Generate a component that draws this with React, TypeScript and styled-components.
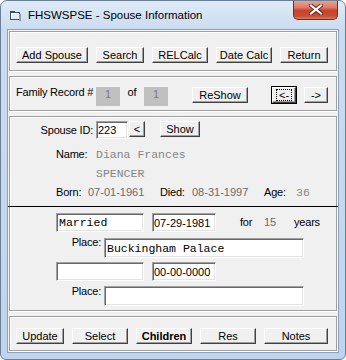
import styled, { createGlobalStyle } from "styled-components";

const GlobalStyle = createGlobalStyle`
  * { box-sizing: border-box; }
  html, body { margin: 0; padding: 0; background: #fff; }
  body {
    font-family: "Liberation Sans", Arial, sans-serif;
    font-size: 11px;
    color: #000;
  }
`;

const Window = styled.div`
  width: 346px;
  height: 360px;
  display: flex;
  flex-direction: column;
  background: linear-gradient(180deg, #dfeaf7 0px, #cadcf0 28px, #bfd4ec 100%);
  border: 1px solid #6b7f99;
  border-radius: 7px 7px 6px 6px;
  overflow: hidden;
`;

const TitleBar = styled.div`
  height: 28px;
  display: flex;
  align-items: center;
  flex-shrink: 0;
`;

const TitleIcon = styled.svg`
  margin-left: 9px;
  margin-top: 2px;
`;

const Title = styled.span`
  margin-left: 7px;
  font-family: "Liberation Sans", Arial, sans-serif;
  font-size: 11.5px;
  color: #000;
`;

const CloseButton = styled.div`
  margin-left: auto;
  margin-right: 7px;
  align-self: flex-start;
  margin-top: -1px;
  width: 45px;
  height: 20px;
  border: 1px solid #7c2a1f;
  border-top: none;
  border-radius: 0 0 5px 5px;
  background: linear-gradient(180deg, #e9a898 0%, #dd7a66 40%, #c7432c 55%, #c94e33 85%, #dc7b56 100%);
  display: flex;
  align-items: center;
  justify-content: center;
`;

const Client = styled.div`
  margin: 0 6px;
  height: 324px;
  flex-shrink: 0;
  background: #f0f0f0;
  border: 1px solid #8ca1bd;
  padding: 0 1px;
  display: flex;
  flex-direction: column;
`;

const Panel = styled.div<{ $h: number; $pt: number; $mt: number; $pl?: number }>`
  height: ${({ $h }) => $h}px;
  margin-top: ${({ $mt }) => $mt}px;
  padding-top: ${({ $pt }) => $pt}px;
  padding-left: ${({ $pl }) => $pl ?? 6}px;
  border: 1px solid #a0a0a0;
  box-shadow: inset 1px 1px 0 #fff, 1px 1px 0 #fff;
  display: flex;
  flex-direction: column;
`;

const Row = styled.div<{ $h: number; $mt?: number; $top?: boolean }>`
  display: flex;
  align-items: ${({ $top }) => ($top ? "flex-start" : "center")};
  height: ${({ $h }) => $h}px;
  margin-top: ${({ $mt }) => $mt ?? 0}px;
  flex-shrink: 0;
`;

const Button = styled.button<{ $w: number; $ml?: number; $bold?: boolean; $h?: number }>`
  width: ${({ $w }) => $w}px;
  height: ${({ $h }) => $h ?? 16}px;
  margin: 0 0 0 ${({ $ml }) => $ml ?? 0}px;
  padding: 0;
  flex-shrink: 0;
  font-family: "Liberation Sans", Arial, sans-serif;
  font-size: 11px;
  font-weight: ${({ $bold }) => ($bold ? 700 : 400)};
  line-height: 13px;
  color: #000;
  background: #f0f0f0;
  border: 1px solid;
  border-color: #fff #404040 #404040 #fff;
  box-shadow: inset -1px -1px 0 #a0a0a0;
`;

const DefaultButton = styled(Button)`
  outline: 1px solid #000;
  outline-offset: 0;
  display: flex;
  align-items: center;
  justify-content: center;
`;

const FocusRing = styled.span`
  border: 1px dotted #000;
  padding: 0 2px;
  line-height: 10px;
  height: 12px;
`;

const Label = styled.span<{ $w?: number; $ml?: number; $right?: boolean; $center?: boolean; $mt?: number }>`
  display: inline-block;
  flex-shrink: 0;
  width: ${({ $w }) => ($w ? `${$w}px` : "auto")};
  margin-left: ${({ $ml }) => $ml ?? 0}px;
  margin-top: ${({ $mt }) => $mt ?? 0}px;
  padding-right: ${({ $right }) => ($right ? 3 : 0)}px;
  text-align: ${({ $right, $center }) => ($right ? "right" : $center ? "center" : "left")};
  letter-spacing: -0.2px;
  line-height: 13px;
  white-space: nowrap;
`;

const Value = styled.span<{ $w?: number; $mono?: boolean; $ml?: number }>`
  display: inline-block;
  flex-shrink: 0;
  width: ${({ $w }) => ($w ? `${$w}px` : "auto")};
  margin-left: ${({ $ml }) => $ml ?? 0}px;
  font-family: ${({ $mono }) =>
    $mono ? '"Liberation Mono", "Courier New", monospace' : '"Liberation Sans", Arial, sans-serif'};
  font-size: ${({ $mono }) => ($mono ? 11.5 : 11)}px;
  color: ${({ $mono }) => ($mono ? "#858585" : "#6a6a6a")};
  line-height: 13px;
  white-space: nowrap;
`;

const CountBox = styled.div`
  width: 24px;
  height: 19px;
  flex-shrink: 0;
  background: #c0c0c0;
  color: #7a7a7a;
  font-family: "Liberation Sans", Arial, sans-serif;
  font-size: 11px;
  text-align: center;
  line-height: 13px;
  padding-top: 1px;
`;

const Field = styled.div<{ $w: number; $h?: number; $ml?: number; $mono?: boolean }>`
  width: ${({ $w }) => $w}px;
  height: ${({ $h }) => $h ?? 19}px;
  margin-left: ${({ $ml }) => $ml ?? 0}px;
  flex-shrink: 0;
  background: #fff;
  border: 1px solid;
  border-color: #a0a0a0 #fff #fff #a0a0a0;
  box-shadow: inset 1px 1px 0 #696969, inset -1px -1px 0 #e3e3e3;
  padding-left: ${({ $mono }) => ($mono ? 2 : 1)}px;
  display: flex;
  align-items: center;
  font-family: ${({ $mono }) =>
    $mono ? '"Liberation Mono", "Courier New", monospace' : '"Liberation Sans", Arial, sans-serif'};
  font-size: ${({ $mono }) => ($mono ? 11.5 : 11)}px;
  color: #000;
  white-space: nowrap;
`;

const Divider = styled.div`
  height: 1px;
  background: #000;
  margin: 5px -2px 0 -2px;
  flex-shrink: 0;
`;

export default function App() {
  return (
    <>
      <GlobalStyle />
      <Window>
        <TitleBar>
          <TitleIcon width="11" height="10" viewBox="0 0 11 10">
            <rect x="0.5" y="1.5" width="9" height="7" fill="#fff" stroke="#3d4b5e" />
            <rect x="0" y="0" width="5" height="2" fill="#3d4b5e" />
            <rect x="2" y="3" width="7" height="5" fill="#e3ecf6" />
            <rect x="9" y="3" width="2" height="7" fill="#8b9bb0" />
          </TitleIcon>
          <Title>FHSWSPSE - Spouse Information</Title>
          <CloseButton>
            <svg width="14" height="11" viewBox="0 0 14 11">
              <path d="M2 1.5 L12 9.5 M12 1.5 L2 9.5" stroke="#5a2218" strokeWidth="4" strokeLinecap="square" />
              <path d="M2 1.5 L12 9.5 M12 1.5 L2 9.5" stroke="#fff" strokeWidth="2.2" strokeLinecap="square" />
            </svg>
          </CloseButton>
        </TitleBar>

        <Client>
          <Panel $h={40} $pt={15} $mt={1}>
            <Row $h={16}>
              <Button $w={72}>Add Spouse</Button>
              <Button $w={48} $ml={8}>Search</Button>
              <Button $w={56} $ml={8}>RELCalc</Button>
              <Button $w={56} $ml={8}>Date Calc</Button>
              <Button $w={48} $ml={8}>Return</Button>
            </Row>
          </Panel>

          <Panel $h={35} $pt={10} $mt={5}>
            <Row $h={19} $top>
              <Label $w={80} $mt={-1}>Family Record #</Label>
              <CountBox>1</CountBox>
              <Label $w={24} $mt={-1} $center>of</Label>
              <CountBox>1</CountBox>
              <Button $w={56} $ml={24}>ReShow</Button>
              <DefaultButton $w={24} $ml={24}>
                <FocusRing>&lt;-</FocusRing>
              </DefaultButton>
              <Button $w={24} $ml={8}>-&gt;</Button>
            </Row>
          </Panel>

          <Panel $h={195} $pt={4} $mt={5} $pl={0}>
            <Row $h={18} $top>
              <Label $w={86} $right $mt={3}>Spouse ID:</Label>
              <Field $w={32} $h={18}>223</Field>
              <Button $w={16} $ml={1}>&lt;</Button>
              <Button $w={40} $ml={15}>Show</Button>
            </Row>
            <Row $h={20} $mt={5}>
              <Label $w={40} $ml={46}>Name:</Label>
              <Value $mono>Diana Frances</Value>
            </Row>
            <Row $h={19}>
              <Value $mono $ml={86}>SPENCER</Value>
            </Row>
            <Row $h={18}>
              <Label $w={32} $ml={46}>Born:</Label>
              <Value $w={72}>07-01-1961</Value>
              <Label $w={32}>Died:</Label>
              <Value $w={72}>08-31-1997</Value>
              <Label $w={32}>Age:</Label>
              <Value $mono>36</Value>
            </Row>
            <Divider />
            <Row $h={19} $mt={6}>
              <Field $w={88} $ml={46} $mono>Married</Field>
              <Field $w={64} $ml={8}>07-29-1981</Field>
              <Label $w={24} $ml={24}>for</Label>
              <Value $w={30}>15</Value>
              <Label>years</Label>
            </Row>
            <Row $h={20} $mt={6} $top>
              <Label $w={48} $ml={46} $right $mt={-2}>Place:</Label>
              <Field $w={200} $h={20} $mono>Buckingham Palace</Field>
            </Row>
            <Row $h={19} $mt={4}>
              <Field $w={88} $ml={46} $mono />
              <Field $w={64} $ml={8}>00-00-0000</Field>
            </Row>
            <Row $h={20} $mt={5} $top>
              <Label $w={48} $ml={46} $right $mt={-1}>Place:</Label>
              <Field $w={200} $h={20} $mono />
            </Row>
          </Panel>

          <Panel $h={35} $pt={11} $mt={5}>
            <Row $h={16}>
              <Button $w={48}>Update</Button>
              <Button $w={56} $ml={8}>Select</Button>
              <Button $w={56} $ml={8} $bold>Children</Button>
              <Button $w={56} $ml={8}>Res</Button>
              <Button $w={64} $ml={8}>Notes</Button>
            </Row>
          </Panel>
        </Client>
      </Window>
    </>
  );
}
